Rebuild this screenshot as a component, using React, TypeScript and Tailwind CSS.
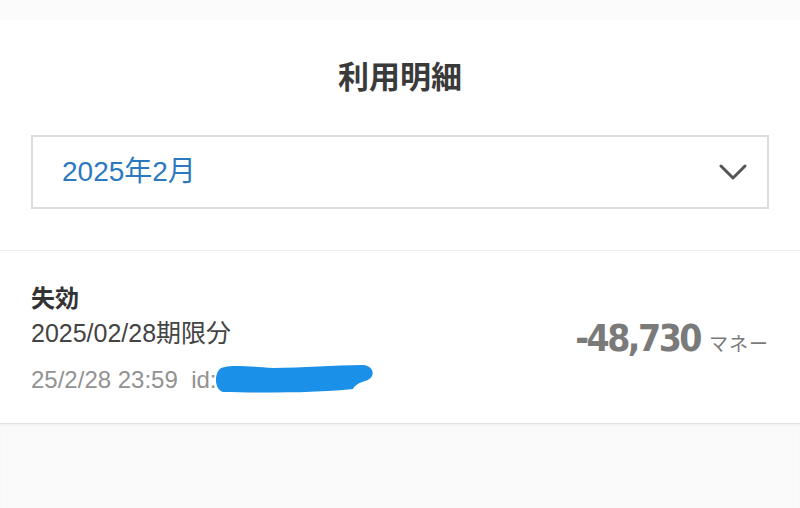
const jp = "font-['Liberation_Sans','Noto_Sans_CJK_JP',sans-serif]";

const ChevronDown = () => (
  <svg width="28" height="18" viewBox="0 0 28 18" fill="none">
    <path d="M2 3 L14 15 L26 3" stroke="#555" strokeWidth="3" strokeLinecap="round" strokeLinejoin="round" />
  </svg>
);

// pen mark hiding the id
const Scribble = () => (
  <svg width="164" height="32" viewBox="0 0 164 32" className="absolute left-[182px] top-[-3px]">
    <path
      d="M6 8 C 10 2, 30 4, 60 6 C 90 6, 120 3, 150 3 C 162 4, 163 16, 152 19 C 146 21, 142 23, 140 27 C 100 31, 50 31, 10 30 C 2 28, 1 14, 6 8 Z"
      fill="#1a90e8"
    />
  </svg>
);

export default function App() {
  return (
    <div className={`w-[800px] h-[508px] bg-white flex flex-col ${jp}`}>
      <div className="h-[20px] bg-[#fbfbfb]" />
      <h1 className="pt-[38px] text-center text-[31px] leading-[40px] font-bold text-[#3a3a3a]">
        利用明細
      </h1>
      <div className="mt-[37px] mx-[31px] h-[74px] border-2 border-[#dedede] flex items-center justify-between pl-[29px] pr-[20px]">
        <span className="text-[28px] text-[#2c79c0]">2025年2月</span>
        <ChevronDown />
      </div>
      <div className="mt-[41px] h-px bg-[#ebebeb]" />
      <div className="h-[172px] px-[31px] flex items-start justify-between">
        <div className="flex flex-col pt-[32px]">
          <span className="text-[24px] leading-[32px] font-bold text-[#333]">失効</span>
          <span className="mt-px text-[25px] leading-[34px] text-[#444]">2025/02/28期限分</span>
          <div className="relative mt-[15px] h-[30px]">
            <span className="text-[24px] leading-[30px] text-[#929292]">25/2/28 23:59&nbsp; id:</span>
            <Scribble />
          </div>
        </div>
        <div className="flex items-baseline gap-[9px] pt-[66px]">
          <span className="font-['Liberation_Sans_Narrow','DejaVu_Sans_Condensed',sans-serif] font-bold text-[37px] leading-[44px] tracking-[-2.5px] text-[#7a7a7a]">
            -48,730
          </span>
          <span className="text-[19px] text-[#7a7a7a] tracking-[1px]">マネー</span>
        </div>
      </div>
      <div className="h-px bg-[#e2e2e2]" />
      <div className="flex-1 bg-[#fafafa] shadow-[inset_0_2px_2px_rgba(0,0,0,0.03)]" />
    </div>
  );
}
